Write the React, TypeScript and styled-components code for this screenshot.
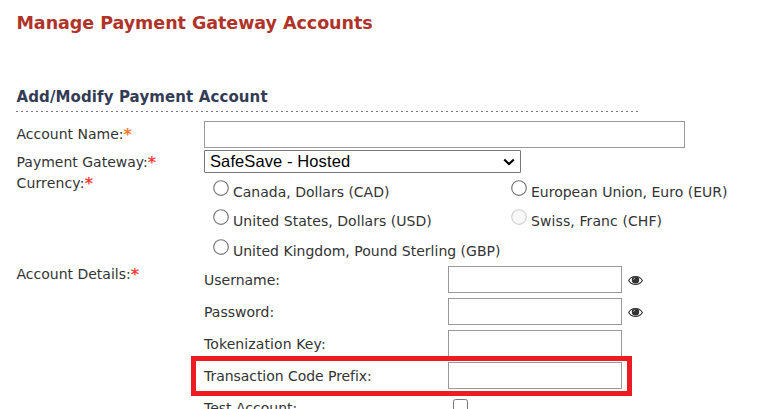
import React from "react";
import styled, { createGlobalStyle } from "styled-components";

const GlobalStyle = createGlobalStyle`
  *, *::before, *::after { box-sizing: border-box; }
  body {
    margin: 0;
    overflow: hidden;
    background: #fff;
    color: #333;
    font: 14px/20px "DejaVu Sans", Verdana, sans-serif;
  }
`;

const Page = styled.main`
  width: 762px;
  height: 409px;
  overflow: hidden;
  padding: 13px 0 0 16px;
  white-space: nowrap;
`;

const Title = styled.h1`
  margin: 0 0 53px;
  padding-left: 0.5px;
  height: 21px;
  font-size: 17.5px;
  line-height: 21px;
  letter-spacing: -0.04px;
  color: #b03329;
`;

const SectionTitle = styled.h2`
  margin: 0;
  padding-left: 0.5px;
  height: 24px;
  font-size: 15px;
  line-height: 20px;
  letter-spacing: 0.11px;
  color: #333c54;
`;

const DottedRule = styled.div`
  width: 622px;
  height: 1px;
  margin-bottom: 9px;
  background: repeating-linear-gradient(to right, #77778c 0 2px, transparent 2px 5px);
`;

const FormRow = styled.div<{ $height: number }>`
  display: grid;
  grid-template-columns: 188px 1fr;
  height: ${(p) => p.$height}px;
`;

const Label = styled.div<{ $top?: number }>`
  padding: ${(p) => p.$top ?? 0}px 0 0 0.5px;
`;

const Required = styled.span<{ $color?: string }>`
  color: ${(p) => p.$color ?? "#fb2d1e"};
  font-size: 16.5px;
  line-height: 0;
  position: relative;
  top: 1px;
  -webkit-text-stroke: 0.25px currentColor;
`;

const Spaced = styled.span<{ $spacing: number }>`
  letter-spacing: ${(p) => p.$spacing}px;
`;

const TextInput = styled.input<{ $width: number }>`
  display: block;
  width: ${(p) => p.$width}px;
  height: 27px;
  margin: 0;
  padding: 2px 4px;
  border: 1px solid #999;
  border-radius: 0;
  background: #fff;
  outline: none;
`;

const SelectBox = styled.div`
  display: flex;
  align-items: center;
  justify-content: space-between;
  width: 317px;
  height: 23px;
  padding: 0 5px 0 5px;
  border: 1px solid #767676;
  border-radius: 1px;
  color: #000;
  font: 16.5px/21px "Liberation Sans", Arial, sans-serif;
  letter-spacing: 0.1px;
`;

const RadioGrid = styled.div`
  display: grid;
  grid-template-columns: 298px 1fr;
  grid-template-rows: 29px 30px 29px;
  padding: 7px 0 0 9px;
`;

const RadioOption = styled.label`
  display: flex;
  align-items: flex-start;
  gap: 4px;
  line-height: 24px;
`;

const RadioMark = styled.svg`
  flex: none;
  width: 16px;
  height: 16px;
`;

const Details = styled.div`
  padding-top: 2px;
`;

const DetailRow = styled.div`
  display: grid;
  grid-template-columns: 244px 174px auto;
  justify-content: start;
  height: 32px;
  line-height: 28px;
`;

const Eye = styled.svg`
  width: 15px;
  height: 11px;
  margin: 9px 0 0 6px;
`;

const Checkbox = styled.span`
  width: 15px;
  height: 15px;
  margin: 5px 0 0 5px;
  border: 1px solid #767676;
  border-radius: 2.5px;
`;

/* Annotation frame laid over the form. */
const Highlight = styled.div`
  position: absolute;
  left: 191px;
  top: 356px;
  width: 441px;
  height: 40px;
  border: 5px solid #ed1c24;
  pointer-events: none;
`;

function Radio({ text, disabled, spacing = 0 }: { text: string; disabled?: boolean; spacing?: number }) {
  return (
    <RadioOption>
      <RadioMark viewBox="0 0 16 16">
        <circle
          cx="8"
          cy="8"
          r="7.3"
          fill={disabled ? "#f8f8f8" : "#fff"}
          stroke={disabled ? "#d0d0d0" : "#767676"}
          strokeWidth="1.15"
        />
      </RadioMark>
      <Spaced $spacing={spacing}>{text}</Spaced>
    </RadioOption>
  );
}

function EyeIcon() {
  return (
    <Eye viewBox="0 0 15 11">
      <path d="M.6 5.6C3.6.2 11.4.2 14.4 5.6 11.4 10.8 3.6 10.8.6 5.6Z" fill="#fff" stroke="#333" strokeWidth="1.1" />
      <circle cx="7.5" cy="4.9" r="3.7" fill="#333" />
      <path d="M5.6 4.8Q5.7 3.1 7.4 2.9" fill="none" stroke="#bbb" strokeWidth=".9" />
    </Eye>
  );
}

export default function App() {
  return (
    <>
      <GlobalStyle />
      <Page>
        <Title>Manage Payment Gateway Accounts</Title>
        <SectionTitle>Add/Modify Payment Account</SectionTitle>
        <DottedRule />
        <FormRow $height={29}>
          <Label $top={3}>
            Account Name:<Required $color="#ff6a13">*</Required>
          </Label>
          <TextInput $width={481} />
        </FormRow>
        <FormRow $height={23}>
          <Label $top={2}>
            Payment Gateway:<Required>*</Required>
          </Label>
          <SelectBox>
            SafeSave - Hosted
            <svg width="12" height="8" viewBox="0 0 12 8">
              <path d="M1.2 1.5 6 6.1l4.8-4.6" fill="none" stroke="#000" strokeWidth="2.1" />
            </svg>
          </SelectBox>
        </FormRow>
        <FormRow $height={91}>
          <Label>
            <Spaced $spacing={0.15}>Currency:</Spaced>
            <Required>*</Required>
          </Label>
          <RadioGrid>
            <Radio text="Canada, Dollars (CAD)" />
            <Radio text="European Union, Euro (EUR)" />
            <Radio text="United States, Dollars (USD)" spacing={0.04} />
            <Radio text="Swiss, Franc (CHF)" spacing={0.1} disabled />
            <Radio text="United Kingdom, Pound Sterling (GBP)" />
          </RadioGrid>
        </FormRow>
        <FormRow $height={170}>
          <Label>
            Account Details:<Required>*</Required>
          </Label>
          <Details>
            <DetailRow>
              Username:
              <TextInput $width={174} />
              <EyeIcon />
            </DetailRow>
            <DetailRow>
              Password:
              <TextInput $width={174} />
              <EyeIcon />
            </DetailRow>
            <DetailRow>
              <Spaced $spacing={0.1}>Tokenization Key:</Spaced>
              <TextInput $width={174} />
            </DetailRow>
            <DetailRow>
              <Spaced $spacing={-0.05}>Transaction Code Prefix:</Spaced>
              <TextInput $width={174} />
            </DetailRow>
            <DetailRow>
              Test Account:
              <Checkbox />
            </DetailRow>
          </Details>
        </FormRow>
      </Page>
      <Highlight />
    </>
  );
}
